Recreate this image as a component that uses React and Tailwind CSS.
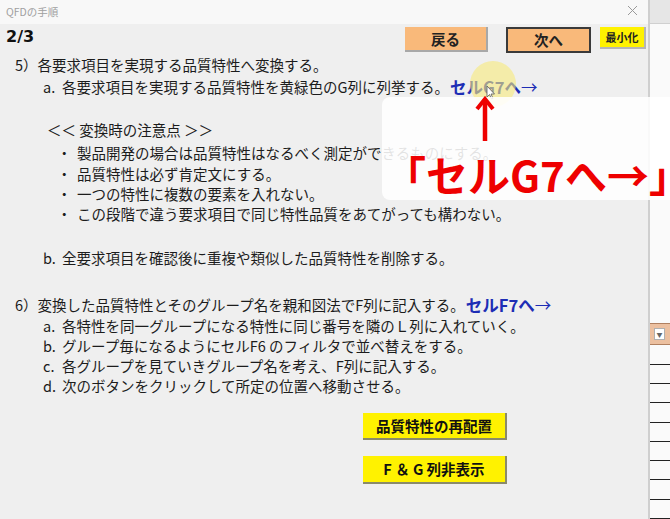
import React from "react";

const jp = "font-['Noto_Sans_CJK_JP','Noto_Sans',sans-serif]";

function Row({ className = "", children }) {
  return <div className={`flex items-center whitespace-nowrap ${className}`}>{children}</div>;
}

function Link({ children }) {
  return (
    <span className="ml-[1px] text-[16.5px] font-bold text-[#1d2db5] leading-none">
      {children}
      <span className="font-normal">→</span>
    </span>
  );
}

export default function App() {
  return (
    <div className={`relative w-[670px] h-[519px] flex overflow-hidden ${jp} text-[#1c1c1c]`}>
      {/* Dialog */}
      <div className="w-[650px] h-full flex flex-col bg-[#efefef] border-r-[2px] border-[#cfcfcf]">
        {/* title bar */}
        <div className="h-[24px] shrink-0 bg-[#f8f8f8] flex items-center justify-between pl-[6px] pr-[10px]">
          <span className="text-[10.5px] text-[#a0a0a0] leading-none">QFDの手順</span>
          <svg width="11" height="11" viewBox="0 0 11 11" className="mt-[-3px]">
            <path d="M1 1L10 10M10 1L1 10" stroke="#9a9a9a" strokeWidth="1" />
          </svg>
        </div>

        {/* header row */}
        <div className="flex mt-[3px] h-[26px] shrink-0">
          <div className="ml-[6px] font-['DejaVu_Sans',sans-serif] font-bold text-[16px] leading-[19px] text-[#111]">
            2/3
          </div>
          <div className="ml-auto flex items-start mr-[2px]">
            <div className="w-[83px] h-[25px] bg-[#f9b97a] border-r-[2px] border-b-[2px] border-[#a8a8a8] flex items-center justify-center text-[14.5px] font-bold text-[#222]">
              戻る
            </div>
            <div className="ml-[18px] w-[85px] h-[26px] bg-[#f9b97a] border-[2px] border-[#3a3a3a] flex items-center justify-center text-[14.5px] font-bold text-[#222]">
              次へ
            </div>
            <div className="ml-[9px] w-[46px] h-[22px] bg-[#fff200] border-r-[2px] border-b-[2px] border-[#b5b5b5] flex items-center justify-center text-[11px] font-bold text-[#222]">
              最小化
            </div>
          </div>
        </div>

        {/* content */}
        <div className="flex flex-col text-[14.5px]">
          <Row className="mt-[1px] h-[22px]">
            <span className="ml-[15px]">5）各要求項目を実現する品質特性へ変換する。</span>
          </Row>
          <Row className="h-[22px]">
            <span className="ml-[43px] w-[19px]">a.</span>
            <span>各要求項目を実現する品質特性を黄緑色のG列に列挙する。</span>
            <Link>セルG7へ</Link>
          </Row>
          <Row className="mt-[21px] h-[22px]">
            <span className="ml-[47px]">＜＜ 変換時の注意点 ＞＞</span>
          </Row>
          <div className="mt-[2px] flex flex-col">
            {[
              "製品開発の場合は品質特性はなるべく測定ができるものにする。",
              "品質特性は必ず肯定文にする。",
              "一つの特性に複数の要素を入れない。",
              "この段階で違う要求項目で同じ特性品質をあてがっても構わない。",
            ].map((t) => (
              <Row key={t} className="h-[20.3px]">
                <span className="ml-[57px] w-[20px]">・</span>
                <span>{t}</span>
              </Row>
            ))}
          </div>
          <Row className="mt-[23px] h-[22px]">
            <span className="ml-[43px] w-[19px]">b.</span>
            <span>全要求項目を確認後に重複や類似した品質特性を削除する。</span>
          </Row>
          <Row className="mt-[25px] h-[22px]">
            <span className="ml-[15px]">6）変換した品質特性とそのグループ名を親和図法でF列に記入する。</span>
            <Link>セルF7へ</Link>
          </Row>
          <div className="flex flex-col">
            {[
              ["a.", "各特性を同一グループになる特性に同じ番号を隣のＬ列に入れていく。"],
              ["b.", "グループ毎になるようにセルF6 のフィルタで並べ替えをする。"],
              ["c.", "各グループを見ていきグループ名を考え、F列に記入する。"],
              ["d.", "次のボタンをクリックして所定の位置へ移動させる。"],
            ].map(([l, t]) => (
              <Row key={l} className="h-[20px]">
                <span className="ml-[43px] w-[19px]">{l}</span>
                <span>{t}</span>
              </Row>
            ))}
          </div>
          <div className="mt-[17px] ml-[363px] w-[144px] h-[27px] bg-[#fff200] border-r-[2px] border-b-[2px] border-[#8a8a6a] flex items-center justify-center text-[14.5px] font-bold text-[#111]">
            品質特性の再配置
          </div>
          <div className="mt-[16px] ml-[363px] w-[144px] h-[28px] bg-[#fff200] border-r-[2px] border-b-[2px] border-[#8a8a6a] flex items-center justify-center text-[14.5px] font-bold text-[#111] whitespace-pre">
            F ＆ G 列非表示
          </div>
        </div>
      </div>

      {/* spreadsheet strip */}
      <div className="flex-1 flex flex-col bg-[#fafafa]">
        <div className="h-[24px] bg-[#e6e6e6] border-b border-[#d0d0d0]" />
        <div className="h-[301px]" />
        <div className="h-[22px] bg-[#ecc0a0] border-y border-[#b08060] flex items-center pl-[4px]">
          <div className="w-[11px] h-[12px] bg-white border border-[#b0b0b0] flex items-center justify-center text-[6px] text-[#666]">▼</div>
        </div>
        {[0, 1, 2, 3, 4, 5, 6, 7, 8].map((i) => (
          <div key={i} className="h-[19.3px] shrink-0 border-b border-[#222]" />
        ))}
      </div>

      {/* cursor highlight */}
      <div className="absolute left-[470px] top-[61px] w-[46px] h-[46px] rounded-full bg-[#f6e97a]/60" />
      <svg className="absolute left-[486px] top-[85px]" width="10" height="15" viewBox="0 0 10 15">
        <path d="M1 1L1 12L3.5 9.5L5.5 14L7 13.3L5 9L8.5 9Z" fill="#fff" stroke="#555" strokeWidth="0.8" />
      </svg>

      {/* annotation overlay */}
      <div className="absolute left-[382px] top-[97px] w-[288px] h-[103px] rounded-l-[8px] bg-white/[0.88]" />
      <svg className="absolute left-[474px] top-[96px]" width="22" height="46" viewBox="0 0 22 46">
        <path d="M11 4L11 45" stroke="#ee0000" strokeWidth="4.5" />
        <path d="M3 13L11 3L19 13" stroke="#ee0000" strokeWidth="4" fill="none" strokeLinejoin="miter" />
      </svg>
      <div className="absolute left-[384px] top-[148px] text-[42px] font-bold leading-[52px] text-[#ee0000] whitespace-nowrap">
        「セルG7へ→」
      </div>
    </div>
  );
}
